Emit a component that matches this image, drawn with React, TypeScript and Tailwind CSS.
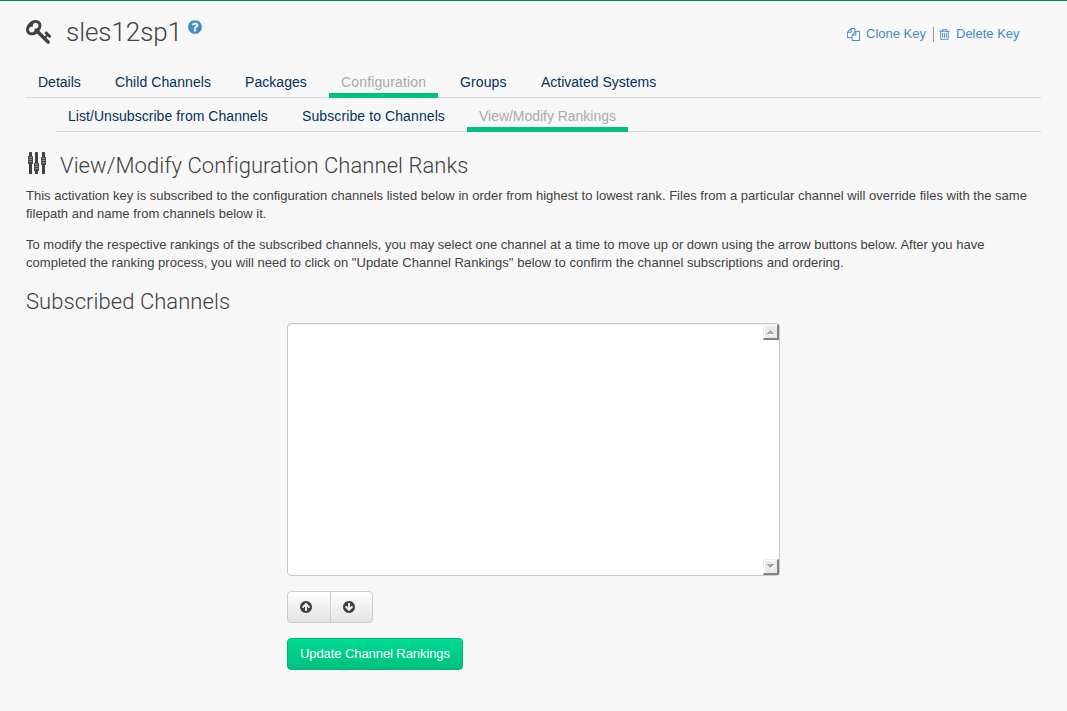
import React from 'react';

const CIRCLE =
  'M1664 896q0 209-103 385.5t-279.5 279.5-385.5 103-385.5-103-279.5-279.5-103-385.5 103-385.5 279.5-279.5 385.5-103 385.5 103 279.5 279.5 103 385.5z';
const KEY =
  'M832 512q0-80-56-136t-136-56-136 56-56 136q0 42 19 83-41-19-83-19-80 0-136 56t-56 136 56 136 136 56 136-56 56-136q0-42-19-83 41 19 83 19 80 0 136-56t56-136zm851 704q0 17-49 66t-66 49q-9 0-28.5-16t-36.5-33-38.5-40-24.5-26l-96 96 220 220q28 28 28 68 0 42-39 81t-81 39q-40 0-68-28l-671-671q-176 131-365 131-163 0-265.5-102.5t-102.5-265.5q0-160 95-313t248-248 313-95q163 0 265.5 102.5t102.5 265.5q0 189-131 365l355 355 96-96q-3-3-26-24.5t-40-38.5-33-36.5-16-28.5q0-17 49-66t66-49q13 0 23 10 6 6 46 44.5t82 79.5 86.5 86 73 78 28.5 41z';
const HELP =
  'M1024 1376v-192q0-14-9-23t-23-9h-192q-14 0-23 9t-9 23v192q0 14 9 23t23 9h192q14 0 23-9t9-23zm256-672q0-88-55.5-163t-138.5-116-170-41q-243 0-371 213-15 24 8 42l132 100q7 6 19 6 16 0 25-12 53-68 86-92 34-24 86-24 48 0 85.5 26t37.5 59q0 38-20 61t-68 45q-63 28-115.5 86.5t-52.5 125.5v36q0 14 9 23t23 9h192q14 0 23-9t9-23q0-19 21.5-49.5t54.5-49.5q32-18 49-28.5t46-35 44.5-48 28-60.5 12.5-81z' +
  CIRCLE;
const COPY =
  'M1696 384q40 0 68 28t28 68v1216q0 40-28 68t-68 28h-960q-40 0-68-28t-28-68v-288h-544q-40 0-68-28t-28-68v-672q0-40 20-88t48-76l408-408q28-28 76-48t88-20h416q40 0 68 28t28 68v328q68-40 128-40h416zm-544 213l-299 299h299v-299zm-640-384l-299 299h299v-299zm196 647l316-316v-416h-384v416q0 40-28 68t-68 28h-416v640h512v-256q0-40 20-88t48-76zm956 804v-1152h-384v416q0 40-28 68t-68 28h-416v640h896z';
const TRASH =
  'M704 736v576q0 14-9 23t-23 9h-64q-14 0-23-9t-9-23v-576q0-14 9-23t23-9h64q14 0 23 9t9 23zm256 0v576q0 14-9 23t-23 9h-64q-14 0-23-9t-9-23v-576q0-14 9-23t23-9h64q14 0 23 9t9 23zm256 0v576q0 14-9 23t-23 9h-64q-14 0-23-9t-9-23v-576q0-14 9-23t23-9h64q14 0 23 9t9 23zm128 724v-948h-896v948q0 22 7 40.5t14.5 27 10.5 8.5h832q3 0 10.5-8.5t14.5-27 7-40.5zm-672-1076h448l-48-117q-7-9-17-11h-317q-10 2-17 11zm928 32v64q0 14-9 23t-23 9h-96v948q0 83-47 143.5t-113 60.5h-832q-66 0-113-58.5t-47-141.5v-952h-96q-14 0-23-9t-9-23v-64q0-14 9-23t23-9h309l70-167q15-37 54-63t79-26h320q40 0 79 26t54 63l70 167h309q14 0 23 9t9 23z';
const ARROW_UP =
  'M1412 895q0-27-18-45l-362-362-91-91q-18-18-45-18t-45 18l-91 91-362 362q-18 18-18 45t18 45l91 91q18 18 45 18t45-18l189-189v502q0 26 19 45t45 19h128q26 0 45-19t19-45v-502l189 189q19 19 45 19t45-19l91-91q18-18 18-45z' +
  CIRCLE;

function Icon({ d, className }: { d: string; className: string }) {
  return (
    <svg viewBox="0 0 1792 1792" className={className} fill="currentColor" fillRule="evenodd" aria-hidden="true">
      <path d={d} />
    </svg>
  );
}

function Sliders() {
  const columns = [
    { x: 1, knob: 4 },
    { x: 7, knob: 11 },
    { x: 14, knob: 5 },
  ];
  return (
    <svg width="20" height="24" viewBox="0 0 20 24" className="shrink-0" aria-hidden="true">
      {columns.map(({ x, knob }) => (
        <g key={x}>
          <rect x={x} y="0" width="3" height="22" rx="0.5" fill="#414141" />
          <rect x={x - 1} y={knob} width="5" height="8" rx="0.5" fill="#484848" />
          <path d={`M${x} ${knob + 1.5}h3M${x} ${knob + 3.5}h3M${x} ${knob + 5.5}h3`} stroke="#888" />
        </g>
      ))}
    </svg>
  );
}

type Tab = { label: string; className: string; active?: boolean };

const mainTabs: Tab[] = [
  { label: 'Details', className: 'w-[67px]' },
  { label: 'Child Channels', className: 'w-[120px] tracking-[0.08px]' },
  { label: 'Packages', className: 'w-[86px] tracking-[0.05px]' },
  { label: 'Configuration', className: 'w-[109px] tracking-[0.15px]', active: true },
  { label: 'Groups', className: 'w-[71px] tracking-[0.1px]' },
  { label: 'Activated Systems', className: 'w-[139px]' },
];

const subTabs: Tab[] = [
  { label: 'List/Unsubscribe from Channels', className: 'w-[224px] tracking-[0.05px]' },
  { label: 'Subscribe to Channels', className: 'w-[167px] tracking-[0.1px]' },
  { label: 'View/Modify Rankings', className: 'w-[161px] tracking-[-0.03px]', active: true },
];

function Tabs({ tabs, className }: { tabs: Tab[]; className: string }) {
  return (
    <nav className={`flex h-[34px] border-b border-[#dadada] text-[14px] ${className}`}>
      {tabs.map((tab) => (
        <a
          key={tab.label}
          className={`mr-[10px] h-[34px] shrink-0 border-b-[5px] pl-3 pt-[5px] leading-[26px] whitespace-nowrap ${tab.className} ${
            tab.active ? 'border-[#00c081] text-[#aaa]' : 'border-transparent text-[#00325a]'
          }`}
        >
          {tab.label}
        </a>
      ))}
    </nav>
  );
}

function ScrollButton({ down }: { down?: boolean }) {
  return (
    <div className="flex size-4 items-center justify-center border-r-2 border-b-2 border-l border-t border-t-[#eee] border-l-[#eee] border-r-[#85827e] border-b-[#85827e] bg-[#eceae7] shadow-[inset_1px_1px_#fff]">
      <svg width="9" height="6" viewBox="0 0 9 6" shapeRendering="crispEdges" aria-hidden="true">
        <path d={down ? 'M2 1h7L5 6z' : 'M1 5h8v1H2z'} fill="#fff" />
        <path d={down ? 'M1 0h7L4.500 4z' : 'M1 5h7L4.500 1z'} fill="#aaa7a2" />
      </svg>
    </div>
  );
}

export default function App() {
  return (
    <div className="h-[711px] w-[1067px] overflow-hidden border-t border-[#008657] bg-[#f7f7f7] pr-[26px] pl-[26px] font-['Liberation_Sans',sans-serif] text-[13px] text-[#414141]">
      <header className="flex h-[62px] items-start justify-between">
        <h1 className="flex items-start font-['Roboto',sans-serif] text-[26px] leading-[30px] font-light">
          <Icon d={KEY} className="mt-[17px] size-[27px]" />
          <span className="mt-[16px] ml-[13px] tracking-[-0.05px]">sles12sp1</span>
          <Icon d={HELP} className="mt-[17.5px] ml-[5px] size-[16px] text-[#428bca]" />
        </h1>
        <div className="mt-[25px] mr-[21px] flex h-4 items-center leading-4 text-[#428bca]">
          <Icon d={COPY} className="size-[13px]" />
          <a className="ml-[6px] w-[67px] whitespace-nowrap">Clone Key</a>
          <span className="h-[15px] w-px bg-[#999]" />
          <Icon d={TRASH} className="ml-[4px] size-[13px]" />
          <a className="ml-[5px] w-[64px] whitespace-nowrap">Delete Key</a>
        </div>
      </header>

      <Tabs tabs={mainTabs} className="mt-[1px]" />
      <Tabs tabs={subTabs} className="ml-[30px]" />

      <h2 className="mt-[20px] flex h-[28px] items-start pl-[2px] font-['Roboto',sans-serif] text-[22px] leading-[28px] font-light">
        <Sliders />
        <span className="ml-[12px] tracking-[0.05px] whitespace-nowrap">View/Modify Configuration Channel Ranks</span>
      </h2>
      <p className="mt-[7px] leading-[18px] tracking-[0.013px] whitespace-nowrap">
        This activation key is subscribed to the configuration channels listed below in order from highest to lowest rank. Files from a particular channel will override files with the same
        <br />
        filepath and name from channels below it.
      </p>
      <p className="mt-[13px] leading-[18px] tracking-[0.01px] whitespace-nowrap">
        To modify the respective rankings of the subscribed channels, you may select one channel at a time to move up or down using the arrow buttons below. After you have
        <br />
        <span className="tracking-[0.025px]">
          completed the ranking process, you will need to click on "Update Channel Rankings" below to confirm the channel subscriptions and ordering.
        </span>
      </p>
      <h2 className="mt-[16px] h-[35px] font-['Roboto',sans-serif] text-[22px] leading-[28px] font-light tracking-[0.05px]">
        Subscribed Channels
      </h2>

      <div className="ml-[261px] w-[493px]">
        <div className="flex h-[253px] flex-col items-end justify-between rounded-[4px] border border-[#c8c8c8] bg-white shadow-[inset_0_1px_1px_rgba(0,0,0,0.075)]">
          <ScrollButton />
          <ScrollButton down />
        </div>
        <div className="mt-[15px] flex h-8 w-[86px] rounded-[4px] border border-[#ccc] bg-linear-to-b from-white to-[#e4e4e4]">
          <button className="flex w-[43px] items-center border-r border-[#ccc] pb-px pl-[10.5px]">
            <Icon d={ARROW_UP} className="size-[14px]" />
          </button>
          <button className="flex items-center pb-px pl-[10.5px]">
            <Icon d={ARROW_UP} className="size-[14px] rotate-180" />
          </button>
        </div>
        <button className="mt-[15px] block h-8 w-[176px] rounded-[4px] border border-[#00b579] bg-linear-to-b from-[#00db93] to-[#00c081] pl-3 text-left tracking-[-0.08px] whitespace-nowrap text-white">
          Update Channel Rankings
        </button>
      </div>
    </div>
  );
}
